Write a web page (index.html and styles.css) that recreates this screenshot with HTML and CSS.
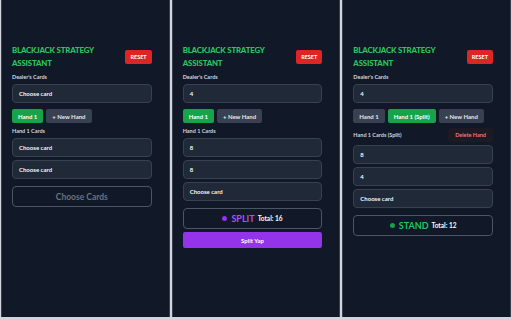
FILE: index.html
```html
<!DOCTYPE html>
<html>

<head>
    <meta charset="utf-8" />
    <title>Blackjack Strategy Assistant</title>
    <link rel="stylesheet" href="styles.css">
</head>

<body>
    <div class="screens">
        <!-- empty state -->
        <div class="panel">
            <div class="header">
                <h1 class="title">Blackjack Strategy Assistant</h1>
                <button class="reset">RESET</button>
            </div>
            <div class="label">Dealer's Cards</div>
            <div class="pick">Choose card</div>
            <div class="hands">
                <button class="hand active">Hand 1</button>
                <button class="hand">+ New Hand</button>
            </div>
            <div class="label">Hand 1 Cards</div>
            <div class="cards">
                <div class="pick">Choose card</div>
                <div class="pick">Choose card</div>
            </div>
            <div class="result empty">Choose Cards</div>
        </div>

        <!-- pair of eights -->
        <div class="panel">
            <div class="header">
                <h1 class="title">Blackjack Strategy Assistant</h1>
                <button class="reset">RESET</button>
            </div>
            <div class="label">Dealer's Cards</div>
            <div class="pick">4</div>
            <div class="hands">
                <button class="hand active">Hand 1</button>
                <button class="hand">+ New Hand</button>
            </div>
            <div class="label">Hand 1 Cards</div>
            <div class="cards">
                <div class="pick">8</div>
                <div class="pick">8</div>
                <div class="pick">Choose card</div>
            </div>
            <div class="result split">
                <span class="dot"></span><span class="move">SPLIT</span><span class="total">Total: 16</span>
            </div>
            <button class="do-split">Split Yap</button>
        </div>

        <!-- after split -->
        <div class="panel">
            <div class="header">
                <h1 class="title">Blackjack Strategy Assistant</h1>
                <button class="reset">RESET</button>
            </div>
            <div class="label">Dealer's Cards</div>
            <div class="pick">4</div>
            <div class="hands">
                <button class="hand">Hand 1</button>
                <button class="hand active">Hand 1 (Split)</button>
                <button class="hand">+ New Hand</button>
            </div>
            <div class="label-row">
                <div class="label">Hand 1 Cards (Split)</div>
                <button class="delete">Delete Hand</button>
            </div>
            <div class="cards">
                <div class="pick">8</div>
                <div class="pick">4</div>
                <div class="pick">Choose card</div>
            </div>
            <div class="result stand">
                <span class="dot"></span><span class="move">STAND</span><span class="total">Total: 12</span>
            </div>
        </div>
    </div>
</body>

</html>
```

FILE: styles.css
```css
* {
    box-sizing: border-box;
}

body {
    margin: 0;
    background: #d1d5db;
    font-family: Lato, "Noto Sans", sans-serif;
    color: #f3f4f6;
}

button {
    font-family: inherit;
    border: 0;
    cursor: pointer;
}

.screens {
    display: grid;
    grid-template-columns: 1fr 1fr 1fr;
    gap: 2px;
    height: 317px;
    padding: 0 1px;
}

.panel {
    display: flex;
    flex-direction: column;
    background: #111827;
    padding: 44px 17px 0 10px;
    border-left: 1px solid #374151;
    border-right: 1px solid #374151;
}

.header {
    display: flex;
    align-items: center;
    justify-content: space-between;
}

.title {
    margin: 0;
    width: 92px;
    font-size: 7.8px;
    line-height: 12.5px;
    font-weight: 900;
    letter-spacing: -0.15px;
    text-transform: uppercase;
    color: #2dc45f;
}

.reset {
    height: 14px;
    padding: 0 5px;
    border-radius: 2px;
    background: #dc2626;
    color: #fff;
    font-size: 5.5px;
    font-weight: 700;
}

.label {
    margin: 5px 0 4px;
    font-size: 5.5px;
    font-weight: 700;
    color: #d1d5db;
}

.pick {
    display: flex;
    align-items: center;
    height: 19px;
    padding: 0 6px;
    border: 1px solid #374151;
    border-radius: 4px;
    background: #1f2937;
    font-size: 6px;
    font-weight: 700;
    color: #f3f4f6;
}

.hands {
    display: flex;
    gap: 3px;
    margin-top: 6px;
}

.hand {
    height: 14px;
    padding: 0 6px;
    border-radius: 2px;
    background: #374151;
    color: #e5e7eb;
    font-size: 6px;
    font-weight: 700;
}

.hand.active {
    background: #16a34a;
    color: #fff;
}

.label-row {
    display: flex;
    align-items: center;
    justify-content: space-between;
    margin: 5px 0 3px;
}

.label-row .label {
    margin: 0;
}

.delete {
    height: 14px;
    padding: 0 7px;
    border-radius: 2px;
    background: #1c1a22;
    color: #f87171;
    font-size: 5.5px;
    font-weight: 700;
}

.cards {
    display: flex;
    flex-direction: column;
    gap: 3px;
}

.result {
    display: flex;
    align-items: center;
    justify-content: center;
    gap: 3px;
    height: 21px;
    margin-top: 7px;
    border: 1px solid #4b5563;
    border-radius: 4px;
    font-weight: 700;
}

.result.empty {
    color: #6b7280;
    font-size: 8.5px;
}

.dot {
    width: 5px;
    height: 5px;
    border-radius: 50%;
    margin-right: 1px;
}

.move {
    font-size: 9px;
}

.total {
    font-size: 6.5px;
    color: #fff;
}

.split .dot {
    background: #9333ea;
}

.split .move {
    color: #a855f7;
}

.stand .dot {
    background: #16a34a;
}

.stand .move {
    color: #22c55e;
}

.do-split {
    height: 16px;
    margin-top: 3px;
    border-radius: 2px;
    background: #9333ea;
    color: #fff;
    font-size: 6px;
    font-weight: 700;
}
```
